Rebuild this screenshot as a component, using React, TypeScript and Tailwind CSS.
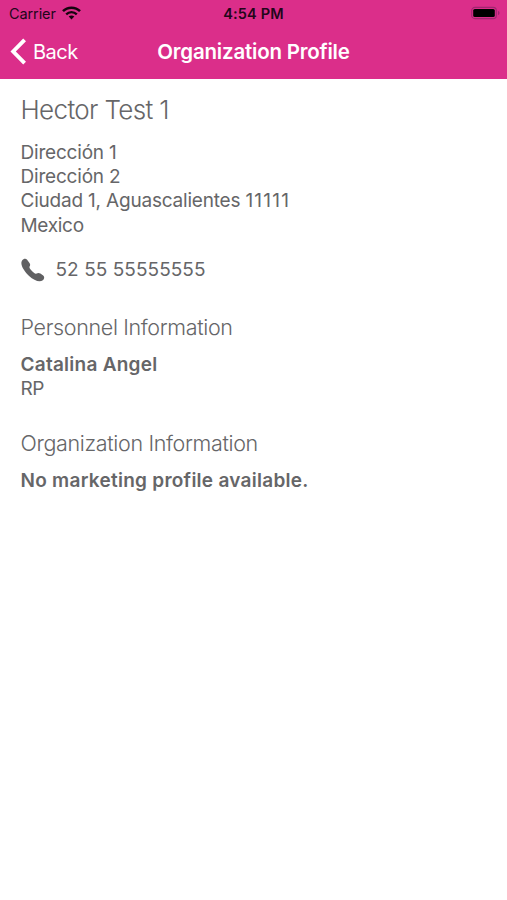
import type { ReactNode } from "react";

const WifiIcon = () => (
    <svg className="w-[19px] h-[14px] -mt-[2px]" viewBox="0 0 19 14" fill="none" stroke="#16040e">
        <path d="M1 5.2C5.6 0.6 13.4 0.6 18 5.2" strokeWidth="2.6" />
        <path d="M4.2 8.4C7.2 5.4 11.8 5.4 14.8 8.4" strokeWidth="2.3" />
        <path d="M6.7 10.5C8.3 9 10.7 9 12.3 10.5L9.5 13.4Z" fill="#16040e" stroke="none" />
    </svg>
);

const BatteryIcon = () => (
    <svg className="w-[31px] h-[14px]" viewBox="0 0 31 14" fill="none">
        <rect x="1.7" y="1.4" width="24.6" height="11.2" rx="3.2" stroke="#a02670" strokeWidth="1.1" />
        <rect x="3.2" y="3" width="21.6" height="8" rx="1.6" fill="#000" />
        <path d="M28 5C30 5.6 30 8.4 28 9Z" fill="#a02670" />
    </svg>
);

const PhoneIcon = () => (
    <svg className="w-6 h-6" viewBox="0 0 24 24" fill="#606062">
        <path d="M1.1 2.4C2.4.7 4.8.2 6.1 1.7L8.5 4.9C9.5 6.3 9.2 7.5 8.6 8.6C8.2 9.4 8.6 10.3 9.4 11.3C10.5 12.7 11.7 13.9 13.2 15C14.1 15.7 14.9 15.8 15.6 15.4C16.8 14.8 18.1 14.7 19.4 15.5L22.2 17.4C23.8 18.7 23.3 20.9 21.8 22.2C18.7 24.9 13 22.4 8.1 18C3.2 13.5-1.5 6.3 1.1 2.4Z" />
    </svg>
);

interface SectionProps {
    title: string,
    children: ReactNode,
}

const Section = ({ title, children }: SectionProps) => (
    <section className="flex flex-col">
        <h2 className="h-[30px] text-[21.5px] leading-[30px] font-light tracking-[-0.35px]">{title}</h2>
        {children}
    </section>
);

const Header = () => (
    <header className="h-[79px] bg-[#db2e8a] shrink-0">
        <div className="grid grid-cols-[1fr_auto_1fr] items-center h-7 pl-[9px] pr-[9px] text-[#22061a]">
            <div className="flex items-center gap-[6px]">
                <span className="text-[14.5px] leading-none tracking-[-0.1px]">Carrier</span>
                <WifiIcon />
            </div>
            <span className="text-center text-[14.5px] leading-none font-semibold tracking-[0.15px]">4:54 PM</span>
            <div className="flex justify-end -mr-[3px] -mt-[2px]">
                <BatteryIcon />
            </div>
        </div>
        <div className="grid grid-cols-[1fr_auto_1fr] items-center h-[49px] pl-[10px] pr-[10px] text-white">
            <button className="flex items-center gap-[6px]">
                <svg className="w-[17px] h-[27px] -mt-[3px]" viewBox="0 0 17 27" fill="none" stroke="#fff" strokeWidth="3.9">
                    <path d="M14.6 1.9L3.2 13.5L14.6 25.1" />
                </svg>
                <span className="-mt-[2px] text-[20px] leading-none tracking-[-0.5px]">Back</span>
            </button>
            <h1 className="text-[20.5px] leading-none font-semibold tracking-[-0.2px]">Organization Profile</h1>
            <span />
        </div>
    </header>
);

const App = () => {
    return (
        <div className="flex flex-col w-full h-screen overflow-hidden bg-white font-['Inter','Liberation_Sans',sans-serif] text-[#666668] whitespace-nowrap">
            <Header />
            <main className="flex flex-col pl-[20.5px] pt-[13px]">
                <h2 className="h-9 text-[26px] leading-9 font-light tracking-[-0.65px]">Hector Test 1</h2>
                <address className="flex flex-col mt-[12.6px] not-italic text-[19px] leading-[24.4px] tracking-[-0.2px]">
                    <span>Dirección 1</span>
                    <span>Dirección 2</span>
                    <span>Ciudad 1, Aguascalientes <span className="tracking-[1.2px]">11111</span></span>
                    <span className="tracking-[-0.3px]">Mexico</span>
                </address>
                <div className="flex items-center gap-[11px] h-[30px] mt-[16.4px] mb-[27px]">
                    <PhoneIcon />
                    <span className="mt-px text-[19px] tracking-[0.05px]">52 55 55555555</span>
                </div>
                <Section title="Personnel Information">
                    <div className="flex flex-col mt-[11px] mb-[26.6px] text-[19px] leading-[24.4px]">
                        <span className="font-semibold tracking-[0.25px]">Catalina Angel</span>
                        <span className="tracking-[-0.4px]">RP</span>
                    </div>
                </Section>
                <Section title="Organization Information">
                    <p className="mt-[11.4px] text-[19px] leading-[24.4px] font-semibold tracking-[0.27px]">
                        No marketing profile available.
                    </p>
                </Section>
            </main>
        </div>
    );
};

export default App;
